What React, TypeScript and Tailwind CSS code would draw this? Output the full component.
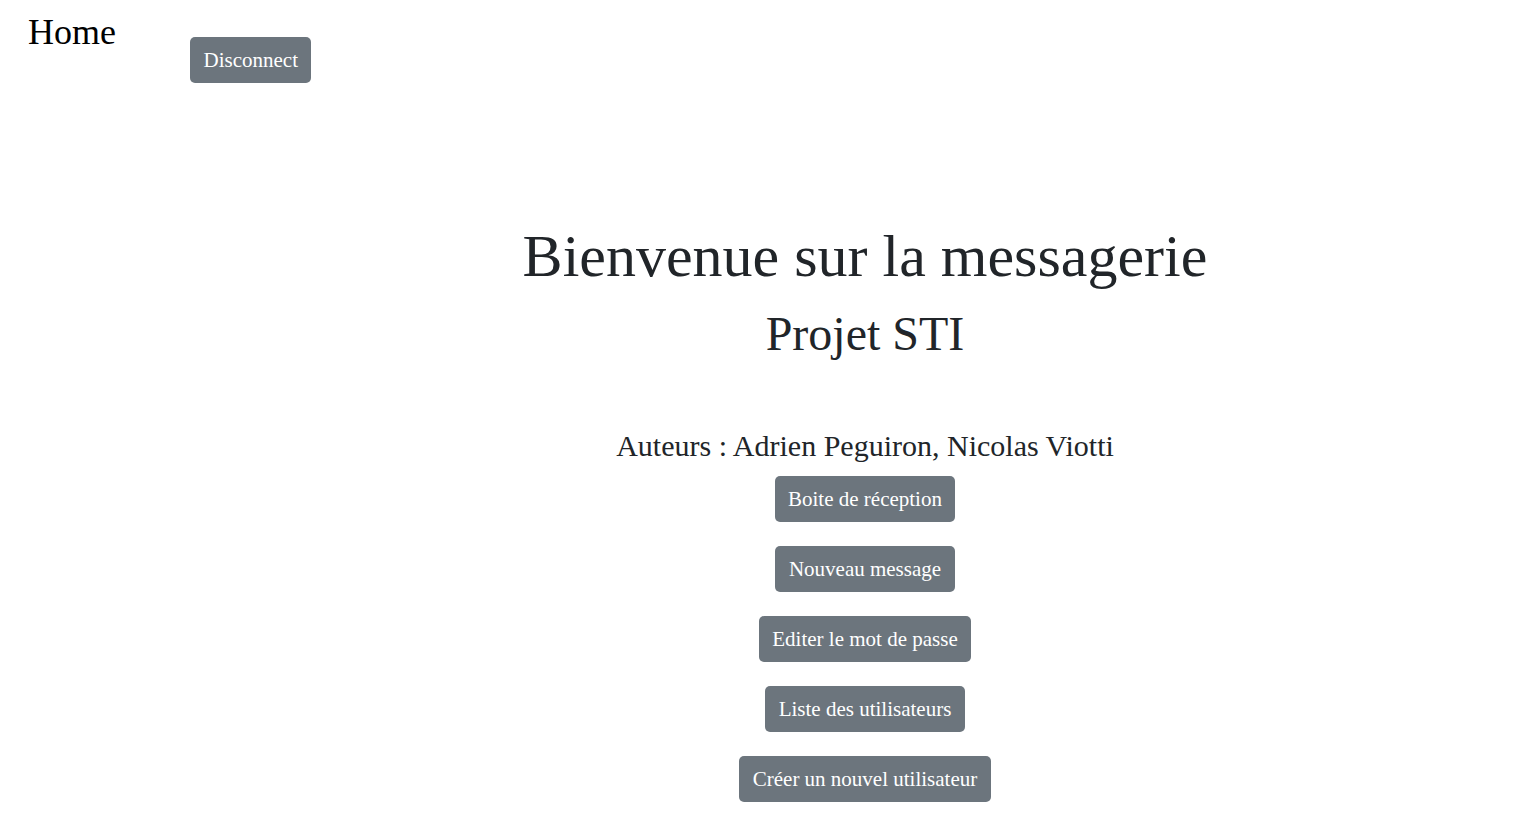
const actions = [
  "Boite de réception",
  "Nouveau message",
  "Editer le mot de passe",
  "Liste des utilisateurs",
  "Créer un nouvel utilisateur",
];

function GreyButton({ label }: { label: string }) {
  return (
    <button className="h-[46px] px-[13.5px] rounded-[5px] bg-[#6c757d] text-white text-[21px] leading-[30px] whitespace-nowrap">
      {label}
    </button>
  );
}

export default function App() {
  return (
    <div className="flex min-h-screen bg-white font-['Liberation_Serif','Times_New_Roman',serif]">
      <aside className="w-[190px] shrink-0 pl-[28px] pt-[11px]">
        <div className="text-[36px] leading-[1.2] text-black">Home</div>
      </aside>

      <main className="flex-1 min-w-0 pl-[6px]">
        <div className="pt-[37px] -ml-[6px]">
          <GreyButton label="Disconnect" />
        </div>

        <section className="flex flex-col items-center text-[#212529] pt-[137px]">
          <h1 className="text-[60px] leading-[1.2] m-0">Bienvenue sur la messagerie</h1>
          <h2 className="text-[48px] leading-[1.2] mt-[13px]">Projet STI</h2>
          <p className="text-[30px] leading-[1.2] mt-[65px]">Auteurs : Adrien Peguiron, Nicolas Viotti</p>

          <div className="flex flex-col items-center gap-6 mt-[12px]">
            {actions.map((a) => (
              <GreyButton key={a} label={a} />
            ))}
          </div>
        </section>
      </main>
    </div>
  );
}
